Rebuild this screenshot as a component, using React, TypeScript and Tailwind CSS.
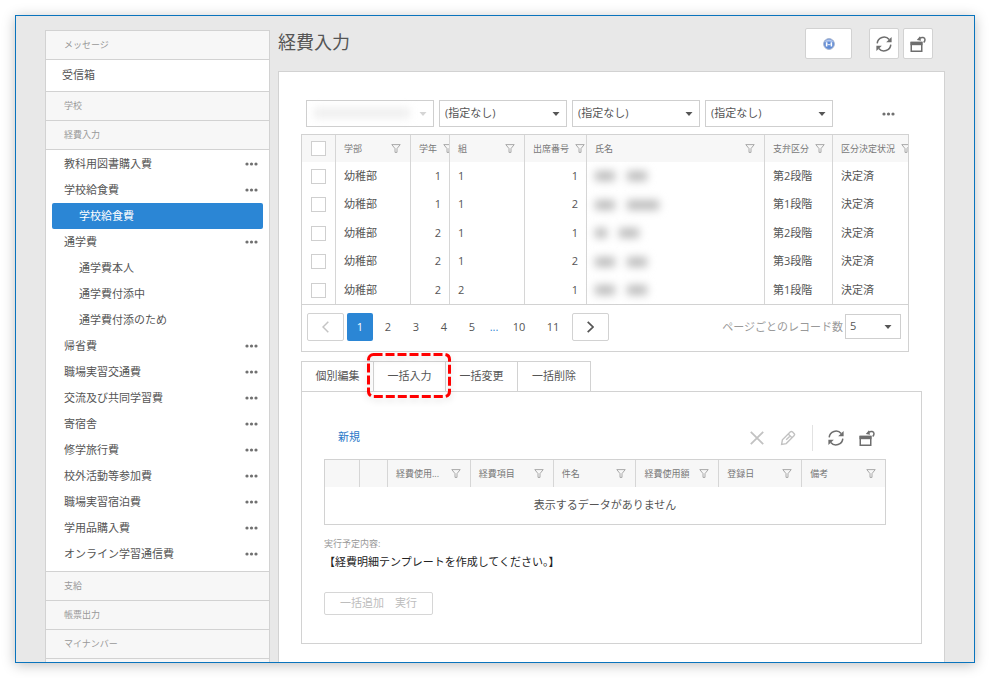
import React from 'react'
import clsx from 'clsx'

type NavItem = { label: string; child?: boolean; active?: boolean }

const navItems: NavItem[] = [
    { label: '教科用図書購入費' },
    { label: '学校給食費' },
    { label: '学校給食費', child: true, active: true },
    { label: '通学費' },
    { label: '通学費本人', child: true },
    { label: '通学費付添中', child: true },
    { label: '通学費付添のため', child: true },
    { label: '帰省費' },
    { label: '職場実習交通費' },
    { label: '交流及び共同学習費' },
    { label: '寄宿舎' },
    { label: '修学旅行費' },
    { label: '校外活動等参加費' },
    { label: '職場実習宿泊費' },
    { label: '学用品購入費' },
    { label: 'オンライン学習通信費' }
]

const studentColumns = [
    { label: '学部', width: 'w-[75px]' },
    { label: '学年', width: 'w-[39px]' },
    { label: '組', width: 'w-[75px]' },
    { label: '出席番号', width: 'w-[62px]' },
    { label: '氏名', width: '' },
    { label: '支弁区分', width: 'w-[68px]' },
    { label: '区分決定状況', width: 'w-[75px]' }
]

const students = [
    { grade: 1, group: 1, no: 1, stage: '第2段階', name: ['w-5', 'w-5'] },
    { grade: 1, group: 1, no: 2, stage: '第1段階', name: ['w-5', 'w-8'] },
    { grade: 2, group: 1, no: 1, stage: '第2段階', name: ['w-3', 'w-5'] },
    { grade: 2, group: 1, no: 2, stage: '第3段階', name: ['w-5', 'w-5'] },
    { grade: 2, group: 2, no: 1, stage: '第1段階', name: ['w-5', 'w-5'] }
]

const expenseColumns = ['経費使用...', '経費項目', '件名', '経費使用額', '登録日', '備考']

const tabs = ['個別編集', '一括入力', '一括変更', '一括削除']

const Dots = () => (
    <svg viewBox="0 0 13 4" className="h-1 w-[13px] shrink-0" fill="#707070">
        <circle cx="2" cy="2" r="1.6" />
        <circle cx="6.5" cy="2" r="1.6" />
        <circle cx="11" cy="2" r="1.6" />
    </svg>
)

const FilterIcon = () => (
    <svg viewBox="0 0 10 9" className="h-[9px] w-[10px] shrink-0" fill="none" stroke="#a0a0a0" strokeWidth="0.9">
        <path d="M0.8 0.6h8.4L6 4.6v3.8H4V4.6z" />
    </svg>
)

const RefreshIcon = () => (
    <svg viewBox="0 0 16 16" className="size-4" fill="none" stroke="#6e6e6e" strokeWidth="1.5">
        <path d="M1.2 7.4A6.8 6.8 0 0 1 13.2 3.6" />
        <path d="M15.6 0.9v5.4h-5.4z" fill="#6e6e6e" stroke="none" />
        <path d="M14.8 8.6A6.8 6.8 0 0 1 2.8 12.4" />
        <path d="M0.4 15.1V9.7h5.4z" fill="#6e6e6e" stroke="none" />
    </svg>
)

const RestoreIcon = () => (
    <svg viewBox="0 0 16 16" className="size-4" fill="none" stroke="#6e6e6e" strokeWidth="1.5">
        <path d="M1.25 6.5h10.5v8.75H1.25z" />
        <path d="M0.5 5.8h12v3.4H0.5z" fill="#6e6e6e" stroke="none" />
        <path d="M9.5 2.4C12 .7 15 1.3 15 3.8c0 1.2-.6 2-1.300 2.700" />
        <path d="M6.800 3.900L10 0.200l1 4.600z" fill="#6e6e6e" stroke="none" />
    </svg>
)

const HelpBall = () => (
    <svg viewBox="0 0 12 12" className="size-3">
        <circle cx="6" cy="6" r="5.400" fill="#5f8bd6" stroke="#a9b6cf" strokeWidth="1" />
        <path d="M1.800 4.300A4.500 4.500 0 0 1 10.200 4.300Q6 2.600 1.800 4.300z" fill="#b4c8ee" />
        <path d="M3.600 4.200v4.200M8.400 4.200v4.200" stroke="#fff" strokeWidth="1.600" />
        <path d="M4.400 6.200Q6 7.600 7.600 6.200" stroke="#fff" strokeWidth="0.9" fill="none" />
    </svg>
)

const Caret = ({ muted }: { muted?: boolean }) => (
    <svg viewBox="0 0 8 4" className="pointer-events-none absolute top-1/2 right-[7px] h-1 w-2 -translate-y-1/2" fill={muted ? '#d5d5d5' : '#555'}>
        <path d="M0.500 0h7L4 4z" />
    </svg>
)

const SectionHeader = ({ label }: { label: string }) => (
    <h2 className="flex h-[29px] items-center bg-[#f7f7f7] pl-[18px] text-[9px] text-[#999]">{label}</h2>
)

const HeadCell = ({ label, width }: { label: string; width?: string }) => (
    <th scope="col" className={clsx('overflow-hidden border-r border-[#d6d6d6] bg-[#f7f7f7] p-0 pl-2 font-normal last:border-r-0', width)}>
        <div className="flex items-center justify-between text-[9px] text-[#777]">
            <span className="shrink-0 pr-1.5">{label}</span>
            <span className={clsx('shrink-0', label === '学年' || label === '区分決定状況' ? '' : label === '出席番号' ? 'pr-0.5' : 'pr-[9px]')}>
                <FilterIcon />
            </span>
        </div>
    </th>
)

const CheckBox = ({ label }: { label: string }) => (
    <input type="checkbox" aria-label={label} className="mx-auto block size-[15px] appearance-none border border-[#cfcfcf] bg-white" />
)

const ToolButton = ({ label, className, children }: { label: string; className: string; children: React.ReactNode }) => (
    <button type="button" aria-label={label} className={clsx('flex h-[31px] items-center justify-center rounded-xs border border-[#d2d2d2] bg-white', className)}>
        {children}
    </button>
)

const Sidebar = () => (
    <nav className="w-[225px] shrink-0 divide-y divide-[#d2d2d2] self-start border border-[#d2d2d2] bg-white">
        <SectionHeader label="メッセージ" />
        <a href="#inbox" className="flex h-8 items-center pl-4 text-[11px]">受信箱</a>
        <SectionHeader label="学校" />
        <SectionHeader label="経費入力" />
        <ul className="pt-px pb-1">
            {navItems.map((item, i) => (
                <li key={i} className={clsx('mx-1.5 flex h-[26px] items-center justify-between rounded-xs pr-[5px]', item.child ? 'pl-[27px]' : 'pl-3', item.active && 'bg-[#2b86d5] text-white')}>
                    <a href="#item" className="text-[11px]">{item.label}</a>
                    {!item.child && <button type="button" aria-label={`${item.label} メニュー`}><Dots /></button>}
                </li>
            ))}
        </ul>
        <SectionHeader label="支給" />
        <SectionHeader label="帳票出力" />
        <SectionHeader label="マイナンバー" />
        <SectionHeader label="" />
    </nav>
)

const Filters = () => (
    <div className="flex items-center gap-[5px] pr-[14px] pl-[5px]">
        {['', '(指定なし)', '(指定なし)', '(指定なし)'].map((label, i) => (
            <div key={i} className="relative w-32">
                <select
                    aria-label={`絞り込み ${i + 1}`}
                    disabled={!label}
                    className="block h-[27px] w-full appearance-none border border-[#cfcfcf] bg-white px-[5px] text-[11px] opacity-100"
                >
                    <option>{label}</option>
                </select>
                {!label && <div className="absolute top-2 left-2 h-2.5 w-24 bg-[#eee] blur-[4px]" />}
                <Caret muted={!label} />
            </div>
        ))}
        <button type="button" aria-label="その他" className="ml-auto"><Dots /></button>
    </div>
)

const StudentGrid = () => (
    <div className="mt-[7px] border border-[#d2d2d2]">
        <table className="w-full table-fixed border-separate border-spacing-0 text-left text-[11px]">
            <thead>
                <tr className="h-[27px]">
                    <th scope="col" className="w-[34px] border-r border-[#d6d6d6] bg-[#f7f7f7] p-0"><CheckBox label="すべて選択" /></th>
                    {studentColumns.map(c => <HeadCell key={c.label} {...c} />)}
                </tr>
            </thead>
            <tbody>
                {students.map((s, i) => (
                    <tr key={i} className="odd:h-7 even:h-[29px] [&>td]:border-r [&>td]:border-[#d6d6d6] [&>td]:px-2 [&>td]:py-0 [&>td:last-child]:border-r-0">
                        <td><div className="-mx-2"><CheckBox label={`行 ${i + 1} を選択`} /></div></td>
                        <td>幼稚部</td>
                        <td className="text-right">{s.grade}</td>
                        <td>{s.group}</td>
                        <td className="text-right">{s.no}</td>
                        <td>
                            <div className="flex gap-3 blur-[4px]">
                                {s.name.map((w, n) => <span key={n} className={clsx('h-2.5 bg-[#bdbdbd]', w)} />)}
                            </div>
                        </td>
                        <td className="whitespace-nowrap">{s.stage}</td>
                        <td>決定済</td>
                    </tr>
                ))}
            </tbody>
        </table>

        {/* Pager */}
        <div className="flex h-[47px] items-start border-t border-[#d2d2d2] pt-2 pr-[7px] pl-[5px] text-[11px]">
            <button type="button" aria-label="前へ" disabled className="flex h-7 w-[37px] items-center justify-center rounded-xs border border-[#d2d2d2]">
                <svg viewBox="0 0 7 12" className="h-3 w-[7px]" fill="none" stroke="#c4c4c4" strokeWidth="1.5"><path d="M6.300 0.800L1 6l5.300 5.200" /></svg>
            </button>
            <button type="button" aria-current="page" className="mr-px ml-[3px] h-7 w-[26px] rounded-xs bg-[#2b86d5] text-white">1</button>
            {[2, 3, 4, 5].map(n => <button key={n} type="button" className="h-7 w-7">{n}</button>)}
            <span className="h-7 w-4 text-center leading-7 text-[#2b86d5]">...</span>
            {[10, 11].map(n => <button key={n} type="button" className="h-7 w-[34px]">{n}</button>)}
            <button type="button" aria-label="次へ" className="ml-0.5 flex h-7 w-[37px] items-center justify-center rounded-xs border border-[#d2d2d2]">
                <svg viewBox="0 0 7 12" className="h-3 w-[7px]" fill="none" stroke="#555" strokeWidth="1.700"><path d="M0.700 0.800L6 6L0.700 11.200" /></svg>
            </button>
            <label htmlFor="page-size" className="mt-1 mr-0.5 ml-auto leading-5 text-[#999]">ページごとのレコード数</label>
            <div className="relative mt-px w-14">
                <select id="page-size" className="block h-[25px] w-full appearance-none border border-[#cfcfcf] bg-white px-1">
                    <option>5</option>
                </select>
                <span className="absolute inset-y-0 right-0.5"><Caret /></span>
            </div>
        </div>
    </div>
)

const ExpenseGrid = () => (
    <table className="w-full table-fixed border-separate border-spacing-0 border border-[#d2d2d2] text-left">
        <thead>
            <tr className="h-[27px]">
                <th scope="col" aria-label="選択" className="w-[35px] border-r border-[#d6d6d6] bg-[#f7f7f7] p-0" />
                <th scope="col" aria-label="操作" className="w-7 border-r border-[#d6d6d6] bg-[#f7f7f7] p-0" />
                {expenseColumns.map(label => <HeadCell key={label} label={label} />)}
            </tr>
        </thead>
        <tbody>
            <tr className="h-[37px]">
                <td colSpan={8} className="p-0 text-center text-[11px]">表示するデータがありません</td>
            </tr>
        </tbody>
    </table>
)

const TabBar = () => (
    <div role="tablist" className="flex w-fit divide-x divide-[#d2d2d2] border-x border-t border-[#d2d2d2] text-[11px]">
        {tabs.map((tab, i) => (
            <button key={tab} type="button" role="tab" aria-selected={i === 1} className="relative h-[29px] w-[72px]">
                {tab}
                {i === 1 && (
                    <svg viewBox="0 0 90 52" className="pointer-events-none absolute -top-[13px] -left-[9px] h-[52px] w-[90px] max-w-none drop-shadow-md" fill="none">
                        <rect x="3.500" y="5.500" width="81" height="42" rx="5" stroke="#f00" strokeWidth="3" strokeDasharray="9 3" />
                    </svg>
                )}
            </button>
        ))}
    </div>
)

const App = () => (
    <div className="h-screen bg-white p-[15px] font-['Open_Sans','Noto_Sans_CJK_JP',sans-serif] text-[#555]">
        <div className="flex h-full gap-2 overflow-hidden border border-[#0a74bd] bg-[#e8e8e8] pt-[14px] pr-[29px] pl-[29px] shadow-[0_2px_12px_rgba(0,0,0,0.25)]">
            <Sidebar />
            <main className="flex min-w-0 flex-1 flex-col">
                <header className="-mt-0.5 flex h-[43px] shrink-0 items-start pr-3">
                    <h1 className="text-lg leading-7">経費入力</h1>
                    <ToolButton label="ヘルプ" className="mr-[17px] ml-auto w-[47px]"><HelpBall /></ToolButton>
                    <ToolButton label="更新" className="mr-1 w-[30px]"><RefreshIcon /></ToolButton>
                    <ToolButton label="元に戻す" className="w-[30px]"><RestoreIcon /></ToolButton>
                </header>
                <div className="flex-1 border border-b-0 border-[#d2d2d2] bg-white pt-7 pr-[22px] pl-[22px]">
                    <div className="pr-[13px]">
                        <Filters />
                        <StudentGrid />
                    </div>
                    <div className="mt-[9px]">
                        <TabBar />
                        <section className="border border-[#d2d2d2] px-[22px] pt-8 pb-7">
                            {/* Toolbar */}
                            <div className="mr-6 flex h-[27px] items-center pl-[14px]">
                                <a href="#new" className="text-[11px] text-[#2b78c8]">新規</a>
                                <div className="ml-auto flex items-center">
                                    <button type="button" aria-label="削除" disabled className="mr-[15px]">
                                        <svg viewBox="0 0 16 16" className="size-4" fill="none" stroke="#c2c2c2" strokeWidth="1.800"><path d="M1.800 1.800l12.400 12.400M14.200 1.800L1.800 14.200" /></svg>
                                    </button>
                                    <button type="button" aria-label="編集" disabled className="mr-4">
                                        <svg viewBox="0 0 16 16" className="size-4" fill="none" stroke="#c2c2c2" strokeWidth="1.400">
                                            <path d="M1.600 14.400l.8-4.600 7.800-7.800a1.700 1.700 0 0 1 2.400 0l1.400 1.400a1.700 1.700 0 0 1 0 2.400l-7.800 7.800z" />
                                            <path d="M8.200 4l3.800 3.800M6.200 9.800l3.400-3.400" />
                                        </svg>
                                    </button>
                                    <span className="mr-[15px] h-[26px] w-px bg-[#e2e2e2]" />
                                    <button type="button" aria-label="更新" className="mr-[15px]"><RefreshIcon /></button>
                                    <button type="button" aria-label="元に戻す"><RestoreIcon /></button>
                                </div>
                            </div>
                            <div className="mt-2 pr-[13px]">
                                <ExpenseGrid />
                            </div>
                            <p className="mt-3 text-[9px] leading-[14px] text-[#999]">実行予定内容:</p>
                            <p className="mt-px text-[11px] leading-5 text-[#222]">【経費明細テンプレートを作成してください。】</p>
                            <button type="button" disabled className="mt-5 block h-[23px] w-[109px] rounded-xs border border-[#d6d6d6] text-[11px] text-[#bdbdbd]">一括追加　実行</button>
                        </section>
                    </div>
                </div>
            </main>
        </div>
    </div>
)

export default App
